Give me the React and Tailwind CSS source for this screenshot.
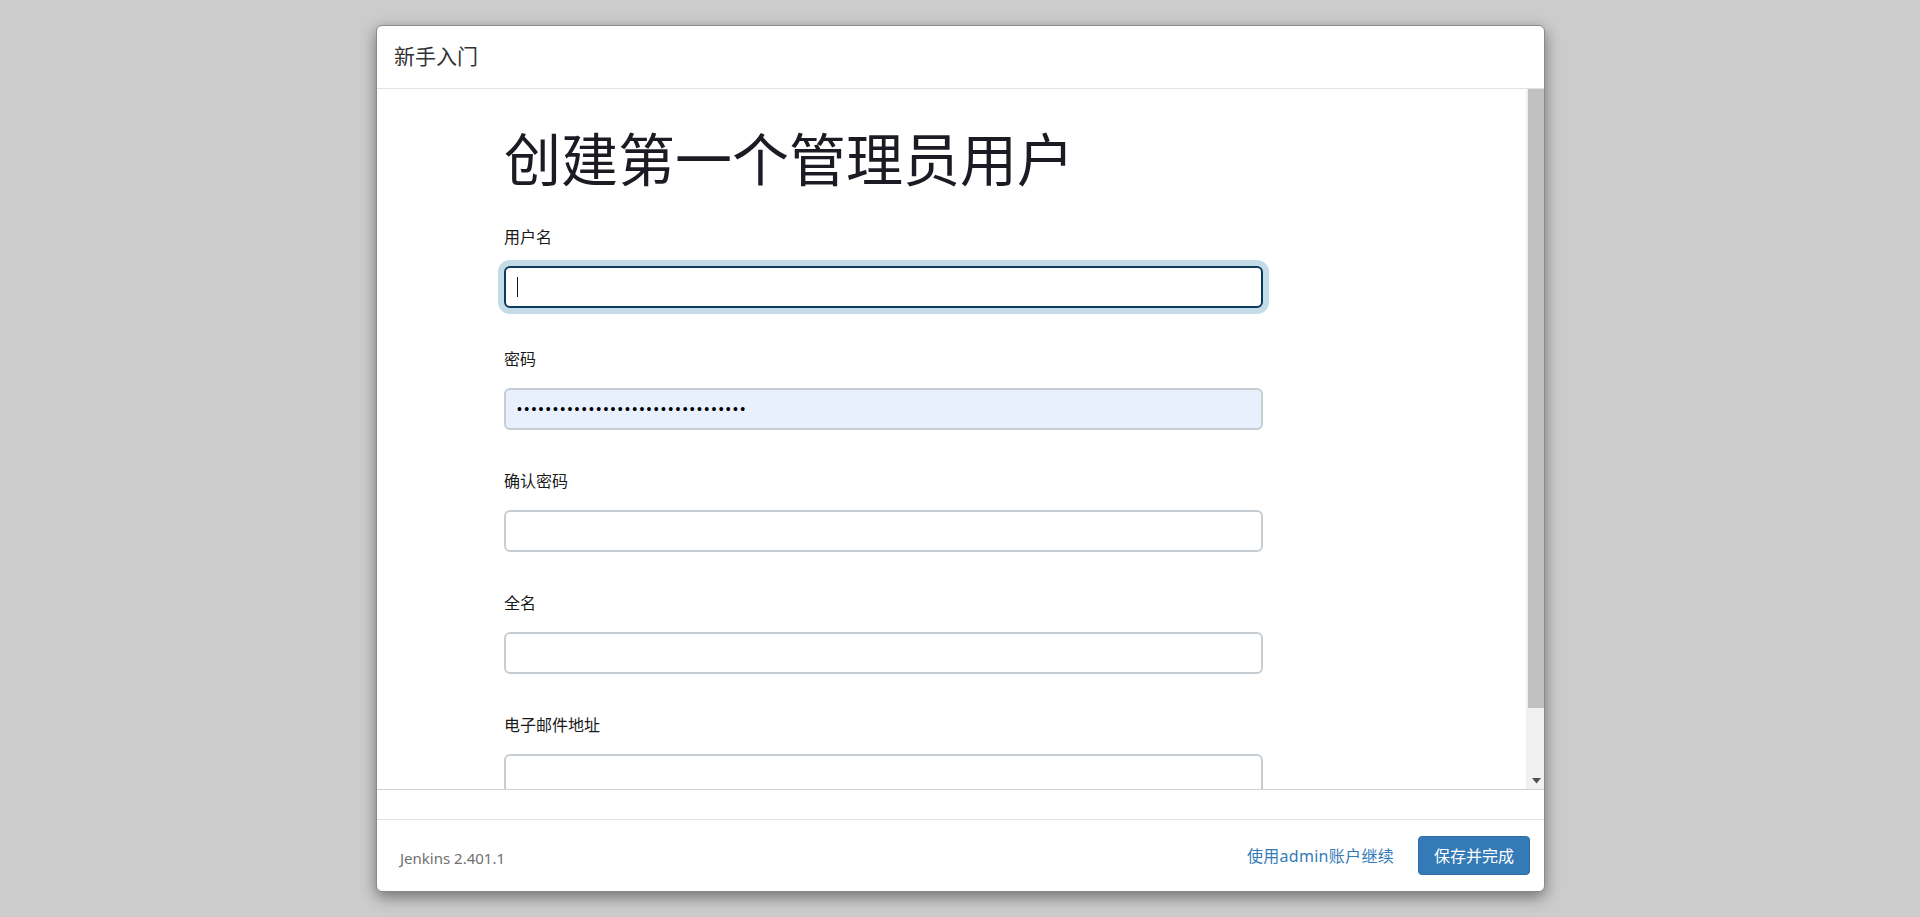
import React from "react";

const FONT = { fontFamily: '"Noto Sans", "Noto Sans CJK SC", sans-serif' };

function Field({ label, children }) {
  return (
    <div className="mb-[39px]">
      <div className="text-[16px] leading-[24px] text-[#1a1a1a] mb-[17px]">{label}</div>
      {children}
    </div>
  );
}

function EmptyInput() {
  return (
    <div className="w-[759px] h-[42px] rounded-[6px] border-2 border-[#c6ced3] bg-white" />
  );
}

export default function App() {
  return (
    <div
      className="w-full h-[917px] bg-[#cccccc] flex items-center justify-center overflow-hidden"
      style={FONT}
    >
      <div className="w-[1169px] h-[867px] ml-[1px] bg-white rounded-[6px] border border-[#8a8a8a] shadow-[0_5px_15px_rgba(0,0,0,0.45)] flex flex-col overflow-hidden">
        {/* Header */}
        <div className="h-[63px] shrink-0 border-b border-[#e3e3e3] flex items-center pl-[17px] text-[21px] text-[#333]">
          新手入门
        </div>

        {/* Body */}
        <div className="h-[701px] shrink-0 border-b border-[#ccd2d6] flex">
          <div className="flex-1 overflow-hidden pl-[127px] pt-[38px]">
            <h1 className="text-[57px] leading-[64px] text-[#1b1b23] font-normal mb-[34px]">
              创建第一个管理员用户
            </h1>

            <Field label="用户名">
              <div className="w-[759px] h-[42px] rounded-[6px] border-2 border-[#0b3c5d] bg-white shadow-[0_0_0_6px_#c4dbe8] flex items-center pl-[11px]">
                <span className="w-[1px] h-[20px] bg-[#111]" />
              </div>
            </Field>

            <Field label="密码">
              <div className="w-[759px] h-[42px] rounded-[6px] border-2 border-[#c6ced3] bg-[#e8f0fe] flex items-center pl-[11px]">
                <span
                  className="text-[14px] leading-none text-black tracking-[2.3px]"
                  style={{ fontFamily: '"Liberation Sans", sans-serif' }}
                >
                  ••••••••••••••••••••••••••••••••
                </span>
              </div>
            </Field>

            <Field label="确认密码">
              <EmptyInput />
            </Field>

            <Field label="全名">
              <EmptyInput />
            </Field>

            <Field label="电子邮件地址">
              <EmptyInput />
            </Field>
          </div>

          {/* Scrollbar */}
          <div className="w-[18px] shrink-0 bg-[#f1f1f1] flex flex-col">
            <div className="h-[619px] ml-[2px] bg-[#c1c1c1]" />
            <div className="flex-1" />
            <div className="h-[17px] flex items-center justify-center pl-[2px]">
              <svg width="9" height="6" viewBox="0 0 9 6">
                <path d="M0 0 H9 L4.5 5.5 Z" fill="#505050" />
              </svg>
            </div>
          </div>
        </div>

        {/* Spacer */}
        <div className="h-[29px] shrink-0" />

        {/* Footer */}
        <div className="flex-1 border-t border-[#e3e3e3] flex items-center justify-between pl-[23px] pr-[14px]">
          <div className="text-[15px] text-[#707070] pt-[6px]">Jenkins 2.401.1</div>
          <div className="flex items-center gap-[24px]">
            <span className="text-[16px] text-[#337ab7] tracking-[0.3px]">使用admin账户继续</span>
            <button className="h-[39px] px-[15px] rounded-[4px] bg-[#337ab7] border border-[#2e6da4] text-white text-[16px] leading-none">
              保存并完成
            </button>
          </div>
        </div>
      </div>
    </div>
  );
}
